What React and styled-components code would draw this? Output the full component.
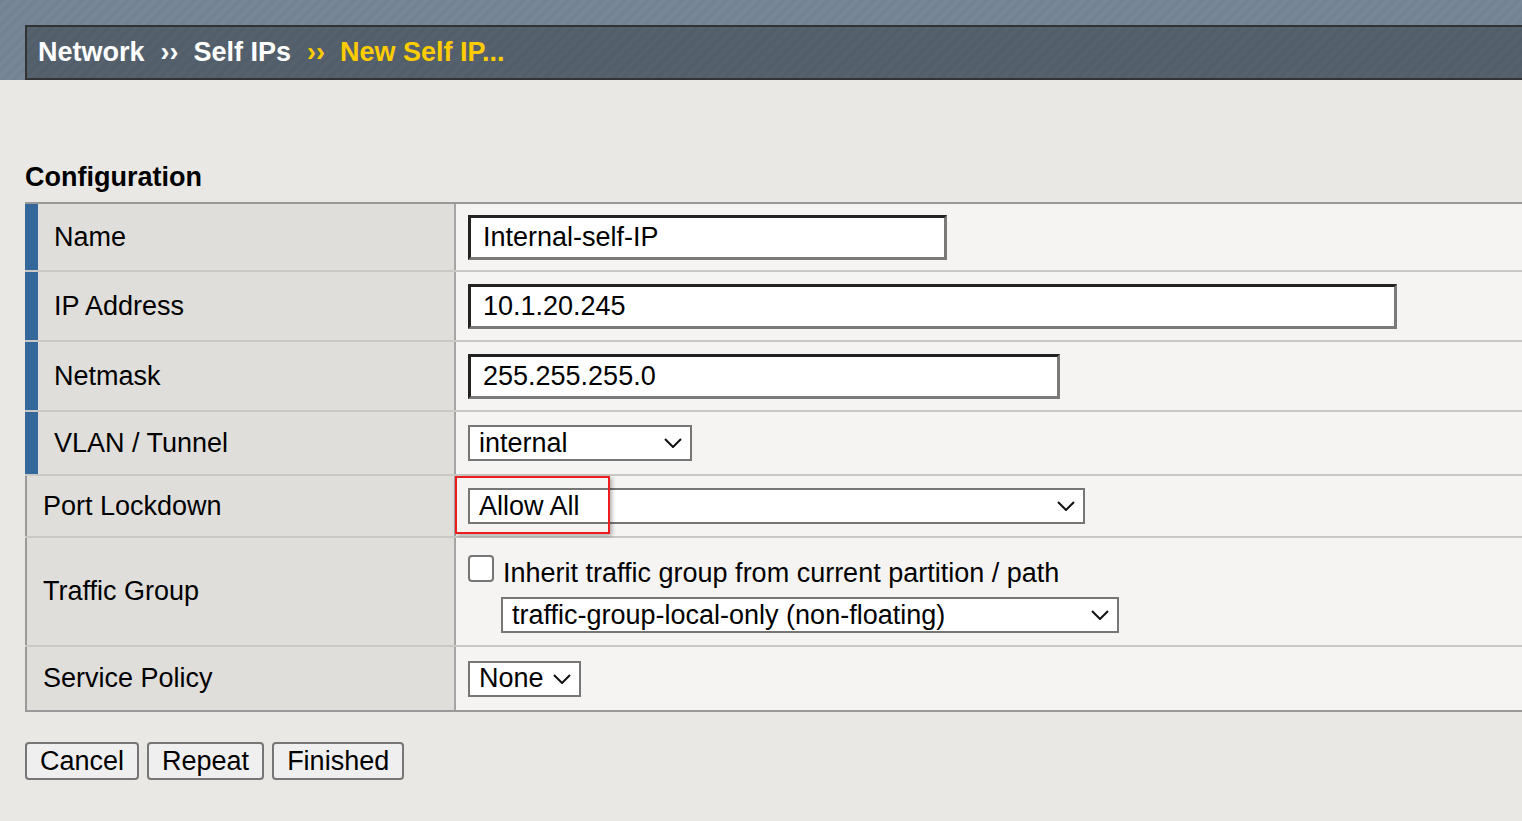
import styled, { createGlobalStyle } from "styled-components";

const GlobalStyle = createGlobalStyle`
  html, body {
    margin: 0;
    padding: 0;
    background: #e9e8e4;
    font-family: "Liberation Sans", Arial, sans-serif;
    overflow: hidden;
  }
`;

const rows = [
  { label: "Name", required: true, height: 68, kind: "input", value: "Internal-self-IP", width: 479 },
  { label: "IP Address", required: true, height: 70, kind: "input", value: "10.1.20.245", width: 929 },
  { label: "Netmask", required: true, height: 70, kind: "input", value: "255.255.255.0", width: 592 },
  { label: "VLAN / Tunnel", required: true, height: 64, kind: "select", value: "internal", width: 224 },
  { label: "Port Lockdown", height: 62, kind: "select", value: "Allow All", width: 617, highlight: true },
  { label: "Traffic Group", height: 109, kind: "traffic" },
  { label: "Service Policy", height: 63, kind: "select", value: "None", width: 113, last: true },
];

function Chevron() {
  return (
    <svg width="18" height="10" viewBox="0 0 18 10">
      <path d="M1 1 L9 9 L17 1" fill="none" stroke="#111" strokeWidth="2" />
    </svg>
  );
}

function Select({ value, width }) {
  return (
    <SelectBox style={{ width }}>
      <span>{value}</span>
      <Chevron />
    </SelectBox>
  );
}

function Value({ row }) {
  if (row.kind === "input") {
    return <TextInput readOnly value={row.value} style={{ width: row.width }} />;
  }
  if (row.kind === "select") {
    return (
      <>
        <Select value={row.value} width={row.width} />
        {row.highlight && <Highlight />}
      </>
    );
  }
  return (
    <TrafficStack>
      <CheckLine>
        <Checkbox type="checkbox" />
        <span>Inherit traffic group from current partition / path</span>
      </CheckLine>
      <Indented>
        <Select value="traffic-group-local-only (non-floating)" width={618} />
      </Indented>
    </TrafficStack>
  );
}

export default function App() {
  return (
    <>
      <GlobalStyle />
      <TopBand>
        <Crumbs>
          <span>Network</span>
          <Sep>››</Sep>
          <span>Self IPs</span>
          <Sep $current>››</Sep>
          <Current>New Self IP...</Current>
        </Crumbs>
      </TopBand>
      <Page>
        <Heading>Configuration</Heading>
        <Table>
          {rows.map((row) => (
            <Row key={row.label} $height={row.height} $last={row.last}>
              <LabelCell $required={row.required}>{row.label}</LabelCell>
              <ValueCell>
                <Value row={row} />
              </ValueCell>
            </Row>
          ))}
        </Table>
        <Buttons>
          <Button>Cancel</Button>
          <Button>Repeat</Button>
          <Button>Finished</Button>
        </Buttons>
      </Page>
    </>
  );
}

const stripes = (base, light) => `repeating-linear-gradient(
  135deg,
  ${base} 0px,
  ${base} 4px,
  ${light} 4px,
  ${light} 8px
)`;

const TopBand = styled.div`
  height: 80px;
  padding: 25px 0 0 25px;
  box-sizing: border-box;
  background: ${stripes("#738393", "#778797")};
`;

const Crumbs = styled.div`
  height: 55px;
  box-sizing: border-box;
  border: 2px solid #333;
  border-right: none;
  background: ${stripes("#525e6a", "#55616d")};
  display: flex;
  align-items: center;
  padding-left: 11px;
  color: #fff;
  font-weight: bold;
  font-size: 27px;
  line-height: 31px;
`;

const Sep = styled.span`
  margin: 0 15px 0 16px;
  color: ${(p) => (p.$current ? "#ffcc00" : "#fff")};
`;

const Current = styled.span`
  color: #ffcc00;
`;

const Page = styled.div`
  padding: 82px 0 40px 25px;
`;

const Heading = styled.h2`
  margin: 0 0 9px;
  font-size: 27px;
  line-height: 31px;
  font-weight: bold;
  color: #000;
`;

const Table = styled.div`
  border-top: 2px solid #999;
  border-bottom: 2px solid #999;
`;

const Row = styled.div`
  display: grid;
  grid-template-columns: 431px 1fr;
  height: ${(p) => p.$height}px;
  box-sizing: border-box;
  border-bottom: ${(p) => (p.$last ? "none" : "2px solid #c9c8c4")};
`;

const LabelCell = styled.div`
  display: flex;
  align-items: center;
  background: #dfdedb;
  border-left: ${(p) => (p.$required ? "13px solid #35689a" : "2px solid #999")};
  border-right: 2px solid #a5a5a5;
  padding-left: 16px;
  font-size: 27px;
  color: #000;
`;

const ValueCell = styled.div`
  position: relative;
  display: flex;
  align-items: center;
  background: #f5f4f2;
  padding-left: 12px;
`;

const TextInput = styled.input`
  height: 45px;
  box-sizing: border-box;
  border-style: solid;
  border-width: 3px;
  border-color: #222 #7a7a7a #7a7a7a #222;
  background: #fff;
  padding: 0 12px;
  font-family: "Liberation Sans", Arial, sans-serif;
  font-size: 27px;
  color: #000;
  outline: none;
`;

const SelectBox = styled.div`
  height: 36px;
  box-sizing: border-box;
  border: 2px solid #767676;
  background: #fff;
  display: flex;
  align-items: center;
  justify-content: space-between;
  padding: 0 8px 0 9px;
  font-size: 27px;
  color: #000;
  white-space: nowrap;
`;

const Highlight = styled.div`
  position: absolute;
  left: -1px;
  top: 0;
  width: 155px;
  height: 58px;
  box-sizing: border-box;
  border: 2px solid #ee1c1c;
  box-shadow: 2px 2px 4px rgba(0, 0, 0, 0.3);
`;

const TrafficStack = styled.div`
  display: flex;
  flex-direction: column;
  gap: 11px;
`;

const CheckLine = styled.label`
  display: flex;
  align-items: baseline;
  gap: 9px;
  height: 36px;
  box-sizing: border-box;
  padding-top: 5px;
  font-size: 27px;
  line-height: 31px;
  color: #000;
`;

const Checkbox = styled.input`
  appearance: none;
  margin: 0;
  width: 26px;
  height: 27px;
  box-sizing: border-box;
  border: 2px solid #767676;
  border-radius: 4px;
  background: #fff;
`;

const Indented = styled.div`
  padding-left: 33px;
`;

const Buttons = styled.div`
  display: flex;
  gap: 8px;
  margin-top: 30px;
`;

const Button = styled.button`
  height: 38px;
  box-sizing: border-box;
  border: 2px solid #767676;
  border-radius: 4px;
  background: #efefef;
  padding: 0 13px;
  font-family: "Liberation Sans", Arial, sans-serif;
  font-size: 27px;
  color: #000;
`;
